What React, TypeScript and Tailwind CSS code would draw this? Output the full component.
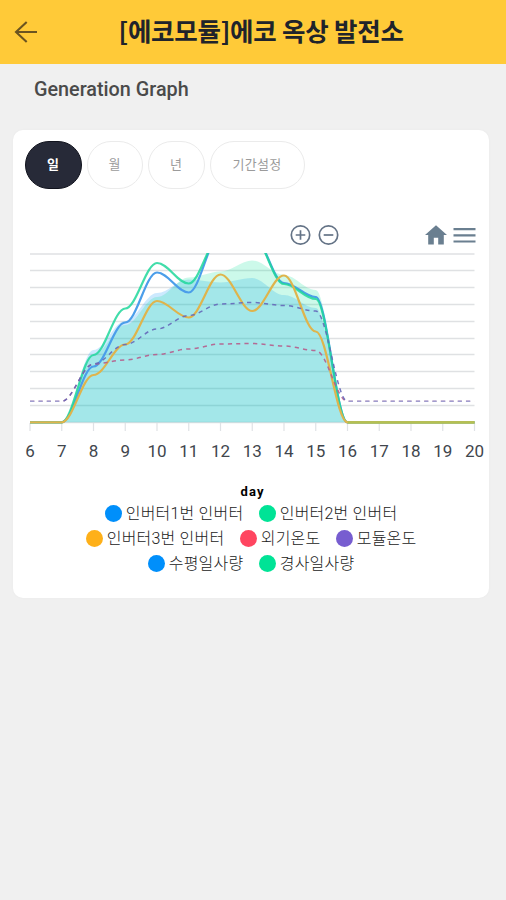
const GRID = [254, 270.5, 287.5, 304.5, 321.5, 338.5, 354.5, 371.5, 388.5, 405.5, 422.5];
const HOURS = [6, 7, 8, 9, 10, 11, 12, 13, 14, 15, 16, 17, 18, 19, 20];
const LEFT = 30;
const STEP = 31.75;
const BASE = 422.3;

const tabs = [
  { label: '일', width: 'w-[57px]', active: true },
  { label: '월', width: 'w-[56.5px]', active: false },
  { label: '년', width: 'w-[56.5px]', active: false },
  { label: '기간설정', width: 'w-[95px]', active: false },
];

const legend = [
  [
    { label: '인버터1번 인버터', color: 'bg-[#008ffb]', width: 'w-[118px]' },
    { label: '인버터2번 인버터', color: 'bg-[#00e396]', width: 'w-[118px]' },
  ],
  [
    { label: '인버터3번 인버터', color: 'bg-[#feb019]', width: 'w-[118px]' },
    { label: '외기온도', color: 'bg-[#ff4560]', width: 'w-[60px]' },
    { label: '모듈온도', color: 'bg-[#775dd0]', width: 'w-[60px]' },
  ],
  [
    { label: '수평일사량', color: 'bg-[#008ffb]', width: 'w-[75px]' },
    { label: '경사일사량', color: 'bg-[#00e396]', width: 'w-[75px]' },
  ],
];

// y positions for 8h to 15h, flat on both sides
function series(mid: number[], rest: number) {
  return [rest, rest, ...mid, rest, rest, rest, rest, rest];
}

function smooth(ys: number[]) {
  return ys
    .map((y, i) => {
      const x = LEFT + i * STEP;
      if (i === 0) return `M${x} ${y}`;
      return `C${x - STEP * 0.65} ${ys[i - 1]} ${x - STEP * 0.35} ${y} ${x} ${y}`;
    })
    .join(' ');
}

const inverter1 = smooth(series([366.5, 322.5, 272.5, 292.5, 234, 234, 283, 297], BASE));
const inverter2 = smooth(series([355, 308.5, 263, 283.5, 236, 235, 284, 299], BASE));
const inverter3 = smooth(series([375, 344.5, 301, 317.5, 274.5, 311, 275.5, 331.5], BASE));
const outdoor = smooth(series([364, 360, 354.5, 349, 344, 343.5, 346, 350.5], 401.3));
const moduleTemp = smooth(series([364, 344.5, 329, 315.5, 304, 302.5, 305.5, 311], 401.3));
const horizontal = smooth(series([350, 321, 293, 279.5, 282.5, 278, 295, 308], BASE));
const inclined = smooth(series([355, 325, 297, 277.5, 271.5, 260.5, 275, 290], BASE));

function Chart() {
  return (
    <svg className="block w-full h-[250px]" viewBox="13 252 476 250">
      <defs>
        <clipPath id="plot">
          <rect x="28" y="253" width="449" height="172" />
        </clipPath>
      </defs>
      {GRID.map((y) => (
        <line key={y} x1="30" x2="474.5" y1={y} y2={y} stroke="#dfe1e3" strokeWidth="1.5" />
      ))}
      {HOURS.map((h, i) => (
        <line key={h} x1={LEFT + i * STEP} x2={LEFT + i * STEP} y1="423" y2="431" stroke="#dfe2e5" strokeWidth="1.2" />
      ))}
      <g clipPath="url(#plot)" fill="none" strokeWidth="2.2">
        <path d={horizontal} fill="#008ffb" fillOpacity="0.2" />
        <path d={inclined} fill="#00e396" fillOpacity="0.2" />
        <path d={inverter1} stroke="#4b9eea" />
        <path d={inverter2} stroke="#20d79b" strokeOpacity="0.85" />
        <path d={inverter3} stroke="#dfb44c" />
        <path d="M348 422.3H474.5" stroke="#b5c052" strokeWidth="2.3" />
        <path d={outdoor} stroke="#b65d8c" strokeWidth="1.5" strokeDasharray="4.2 4.2" strokeOpacity="0.9" />
        <path d={moduleTemp} stroke="#6568b9" strokeWidth="1.5" strokeDasharray="4.2 4.2" strokeOpacity="0.9" />
        <path d="M30 401.3H61M348 401.3H474.5" stroke="#ffffff" strokeOpacity="0.35" strokeWidth="2.5" />
      </g>
      <g fill="#41464d" fontSize="17" fontFamily="Roboto, sans-serif" textAnchor="middle">
        {HOURS.map((h, i) => (
          <text key={h} x={LEFT + i * STEP} y="457">{h}</text>
        ))}
      </g>
      <text x="252" y="496" fill="#000" fontSize="13" fontWeight="700" fontFamily="Roboto, sans-serif" textAnchor="middle" textLength="23">
        day
      </text>
    </svg>
  );
}

function Toolbar() {
  return (
    <div className="flex h-[24px] items-center pl-[277px] pr-[13px]">
      <svg className="h-[22px] w-[50px]" viewBox="0 0 50 22" fill="none" stroke="#647386" strokeWidth="1.7">
        <circle cx="10.5" cy="11" r="9.2" />
        <path d="M5.7 11h9.6M10.5 6.2v9.6" />
        <circle cx="38.5" cy="11" r="9.2" />
        <path d="M33.7 11h9.6" />
      </svg>
      {/* Home + menu */}
      <svg className="ml-auto h-[24px] w-[52px]" viewBox="0 0 52 24" fill="#6a7f90">
        <path d="M12 2.2 1 12h3.2v9.6h5.6v-6.9h4.4v6.9h5.6V12H23z" />
        <path d="M29.5 5h22v2.2h-22zM29.5 11.2h22v2.2h-22zM29.5 17.4h22v2.2h-22z" />
      </svg>
    </div>
  );
}

export default function App() {
  return (
    <div className="flex h-[900px] w-[506px] flex-col overflow-hidden bg-[#f0f0f0] font-['Roboto','Noto_Sans_CJK_KR',sans-serif]">
      <header className="flex h-[63.5px] shrink-0 items-center bg-[#ffca38]">
        <svg className="ml-[14px] h-6 w-6" viewBox="0 0 24 24" fill="none" stroke="#6b5420" strokeWidth="2.1">
          <path d="M23 12H2M12.7 2 2 12l10.7 10" />
        </svg>
        <h1 className="ml-[80.5px] whitespace-nowrap pb-1 font-['Noto_Sans_CJK_KR',sans-serif] text-[25.5px] font-bold leading-[40px] tracking-[-0.25px] text-[#20232b]">
          [에코모듈]에코 옥상 발전소
        </h1>
      </header>

      <h2 className="ml-[34px] mt-[12px] text-[19.8px] font-medium leading-7 text-[#4a4a4a]">Generation Graph</h2>

      <main className="ml-[13px] mt-[26px] h-[468.5px] w-[476px] rounded-[10px] bg-white shadow-[0_0_3px_rgba(0,0,0,0.03)]">
        <div className="flex gap-[5px] pl-[11.5px] pt-[11px]">
          {tabs.map((tab) => (
            <button
              key={tab.label}
              className={`h-[48.5px] rounded-[25px] border text-[13px] ${tab.width} ${
                tab.active ? 'border-[#11131d] bg-[#272a38] font-bold text-white' : 'border-[#ebebeb] bg-white tracking-[0.3px] text-[#9b9b9b]'
              }`}
            >
              {tab.label}
            </button>
          ))}
        </div>
        <div className="mt-[33.5px]">
          <Toolbar />
        </div>
        <div className="mt-[5px]">
          <Chart />
        </div>
        <div className="-mt-[1px] flex flex-col pl-[0.5px]">
          {legend.map((row, i) => (
            <div key={i} className="flex h-[25.3px] items-center justify-center gap-[15px]">
              {row.map((item) => (
                <div key={item.label} className="flex items-center gap-1">
                  <span className={`h-[17px] w-[17px] rounded-full ${item.color}`} />
                  <span className={`whitespace-nowrap pt-[1px] text-[16px] font-light leading-6 tracking-[0.2px] text-[#222] ${item.width}`}>{item.label}</span>
                </div>
              ))}
            </div>
          ))}
        </div>
      </main>
    </div>
  );
}
